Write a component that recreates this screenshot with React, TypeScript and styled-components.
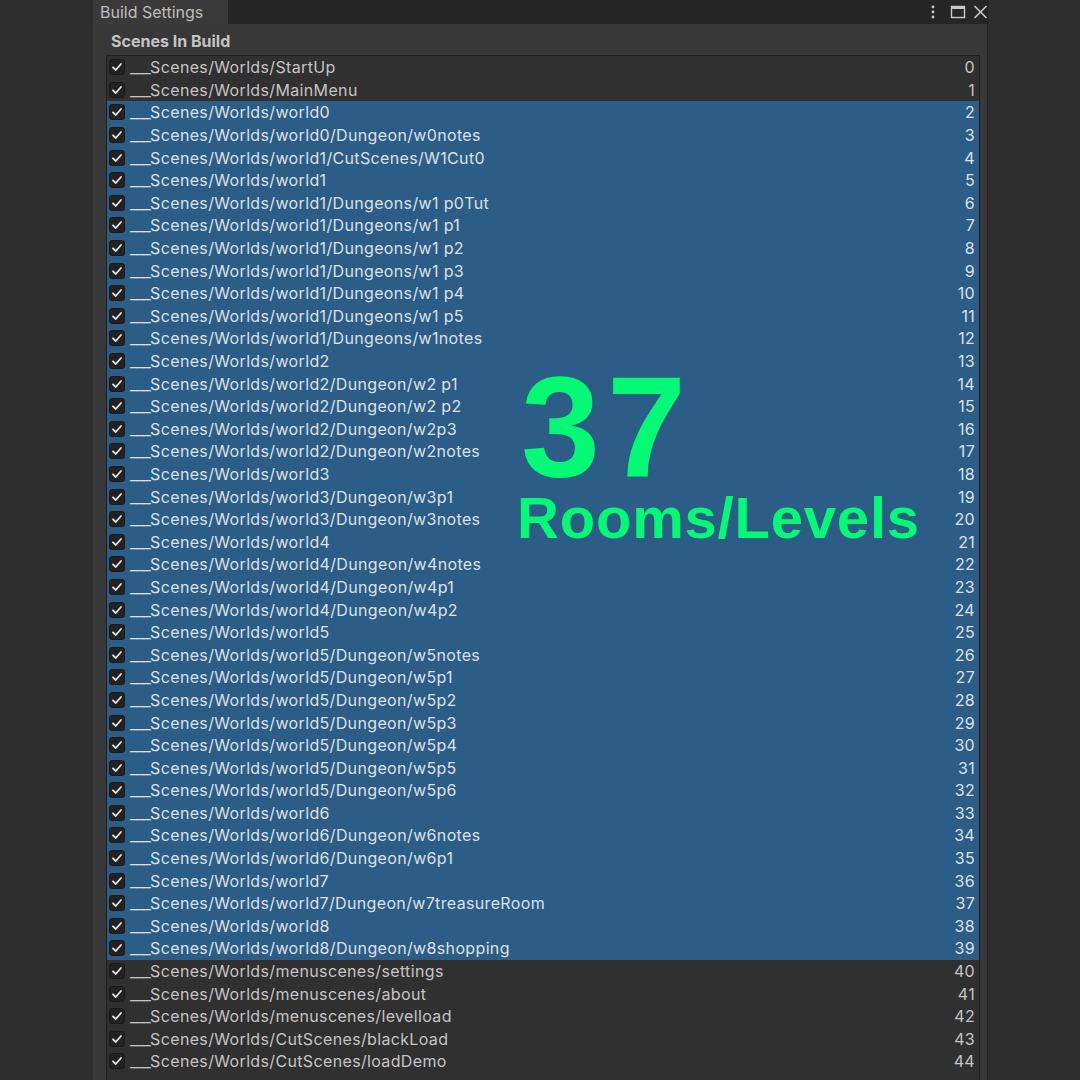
import styled, { createGlobalStyle } from "styled-components";

const GlobalStyle = createGlobalStyle`
  html, body {
    margin: 0;
    padding: 0;
    background: #2e2e2e;
    overflow: hidden;
  }
  body {
    font-family: Inter, "Noto Sans", sans-serif;
  }
`;

const scenes = [
  "StartUp",
  "MainMenu",
  "world0",
  "world0/Dungeon/w0notes",
  "world1/CutScenes/W1Cut0",
  "world1",
  "world1/Dungeons/w1 p0Tut",
  "world1/Dungeons/w1 p1",
  "world1/Dungeons/w1 p2",
  "world1/Dungeons/w1 p3",
  "world1/Dungeons/w1 p4",
  "world1/Dungeons/w1 p5",
  "world1/Dungeons/w1notes",
  "world2",
  "world2/Dungeon/w2 p1",
  "world2/Dungeon/w2 p2",
  "world2/Dungeon/w2p3",
  "world2/Dungeon/w2notes",
  "world3",
  "world3/Dungeon/w3p1",
  "world3/Dungeon/w3notes",
  "world4",
  "world4/Dungeon/w4notes",
  "world4/Dungeon/w4p1",
  "world4/Dungeon/w4p2",
  "world5",
  "world5/Dungeon/w5notes",
  "world5/Dungeon/w5p1",
  "world5/Dungeon/w5p2",
  "world5/Dungeon/w5p3",
  "world5/Dungeon/w5p4",
  "world5/Dungeon/w5p5",
  "world5/Dungeon/w5p6",
  "world6",
  "world6/Dungeon/w6notes",
  "world6/Dungeon/w6p1",
  "world7",
  "world7/Dungeon/w7treasureRoom",
  "world8",
  "world8/Dungeon/w8shopping",
  "menuscenes/settings",
  "menuscenes/about",
  "menuscenes/levelload",
  "CutScenes/blackLoad",
  "CutScenes/loadDemo",
];

const Page = styled.div`
  height: 1080px;
  padding-left: 93px;
  display: flex;
`;

const Window = styled.div`
  width: 894px;
  display: flex;
  flex-direction: column;
  background: #383838;
  border-right: 1px solid #242424;
`;

const TabBar = styled.div`
  height: 24px;
  display: flex;
  align-items: stretch;
  background: #262626;
`;

const Tab = styled.div`
  width: 135px;
  padding-left: 7px;
  box-sizing: border-box;
  display: flex;
  align-items: center;
  background: #3a3a3a;
  color: #bdbdbd;
  font-size: 16px;
`;

const TabTools = styled.div`
  margin-left: auto;
  display: flex;
  align-items: center;
  color: #c8c8c8;
`;

const ToolIcon = styled.span<{ $gap: number }>`
  display: flex;
  margin-left: ${(p) => p.$gap}px;
`;

const Body = styled.div`
  flex: 1;
  display: flex;
  flex-direction: column;
  padding: 0 7px 0 13px;
  min-height: 0;
`;

const SectionTitle = styled.div`
  height: 31px;
  padding-top: 3px;
  box-sizing: border-box;
  display: flex;
  align-items: center;
  padding-left: 5px;
  color: #c4c4c4;
  font-size: 16px;
  font-weight: 700;
`;

const SceneList = styled.div`
  position: relative;
  flex: 1;
  background: #303030;
  border: 1px solid #1d1d1d;
  border-bottom: none;
  overflow: hidden;
`;

const Row = styled.div<{ $selected: boolean }>`
  height: 22.6px;
  display: flex;
  align-items: center;
  padding: 0 4px 0 2px;
  background: ${(p) => (p.$selected ? "#2c5d87" : "transparent")};
  color: ${(p) => (p.$selected ? "#dce0e4" : "#c4c4c4")};
  font-size: 16px;
  white-space: nowrap;
`;

const CheckBox = styled.div`
  width: 16px;
  height: 16px;
  box-sizing: border-box;
  border-radius: 3px;
  background: #222222;
  border: 1px solid #1a1a1a;
  display: flex;
  align-items: center;
  justify-content: center;
  flex-shrink: 0;
`;

const Label = styled.span`
  margin-left: 5px;
  letter-spacing: 0.35px;
`;

const Underscores = styled.span`
  letter-spacing: -0.6px;
`;

const Index = styled.span`
  margin-left: auto;
  letter-spacing: 0.3px;
`;

const Overlay = styled.div`
  position: absolute;
  left: 408px;
  top: 311px;
  display: flex;
  flex-direction: column;
  color: #04fa74;
  font-family: "Liberation Sans", Arial, sans-serif;
  font-weight: 700;
  pointer-events: none;
`;

const BigCount = styled.div`
  font-size: 142px;
  line-height: 0.85;
  padding-left: 6px;
  letter-spacing: 7px;
`;

const BigCaption = styled.div`
  font-size: 58px;
  line-height: 1;
  margin-top: 1px;
  padding-left: 2px;
  letter-spacing: 0.8px;
`;

const Check = () => (
  <svg width="12" height="12" viewBox="0 0 12 12">
    <polyline
      points="2,6.3 4.8,9 10,3"
      fill="none"
      stroke="#e4e4e4"
      strokeWidth="1.8"
      strokeLinecap="round"
      strokeLinejoin="round"
    />
  </svg>
);

const Kebab = () => (
  <svg width="6" height="16" viewBox="0 0 6 16">
    <circle cx="3" cy="3" r="1.4" fill="currentColor" />
    <circle cx="3" cy="8" r="1.4" fill="currentColor" />
    <circle cx="3" cy="13" r="1.4" fill="currentColor" />
  </svg>
);

const Maximize = () => (
  <svg width="16" height="16" viewBox="0 0 16 16">
    <rect x="1.5" y="2.5" width="13" height="11" fill="none" stroke="currentColor" strokeWidth="1.4" />
    <rect x="1" y="2" width="14" height="3" fill="currentColor" />
  </svg>
);

const Close = () => (
  <svg width="13" height="16" viewBox="0 0 13 16">
    <path d="M1 2.5 L12 13.5 M12 2.5 L1 13.5" stroke="currentColor" strokeWidth="1.7" strokeLinecap="round" />
  </svg>
);

export default function App() {
  return (
    <>
      <GlobalStyle />
      <Page>
        <Window>
          <TabBar>
            <Tab>Build Settings</Tab>
            <TabTools>
              <ToolIcon $gap={0}>
                <Kebab />
              </ToolIcon>
              <ToolIcon $gap={14}>
                <Maximize />
              </ToolIcon>
              <ToolIcon $gap={8}>
                <Close />
              </ToolIcon>
            </TabTools>
          </TabBar>
          <Body>
            <SectionTitle>Scenes In Build</SectionTitle>
            <SceneList>
              {scenes.map((s, i) => (
                <Row key={i} $selected={i >= 2 && i <= 39}>
                  <CheckBox>
                    <Check />
                  </CheckBox>
                  <Label>
                    <Underscores>___</Underscores>Scenes/Worlds/{s}
                  </Label>
                  <Index>{i}</Index>
                </Row>
              ))}
              <Overlay>
                <BigCount>37</BigCount>
                <BigCaption>Rooms/Levels</BigCaption>
              </Overlay>
            </SceneList>
          </Body>
        </Window>
      </Page>
    </>
  );
}
